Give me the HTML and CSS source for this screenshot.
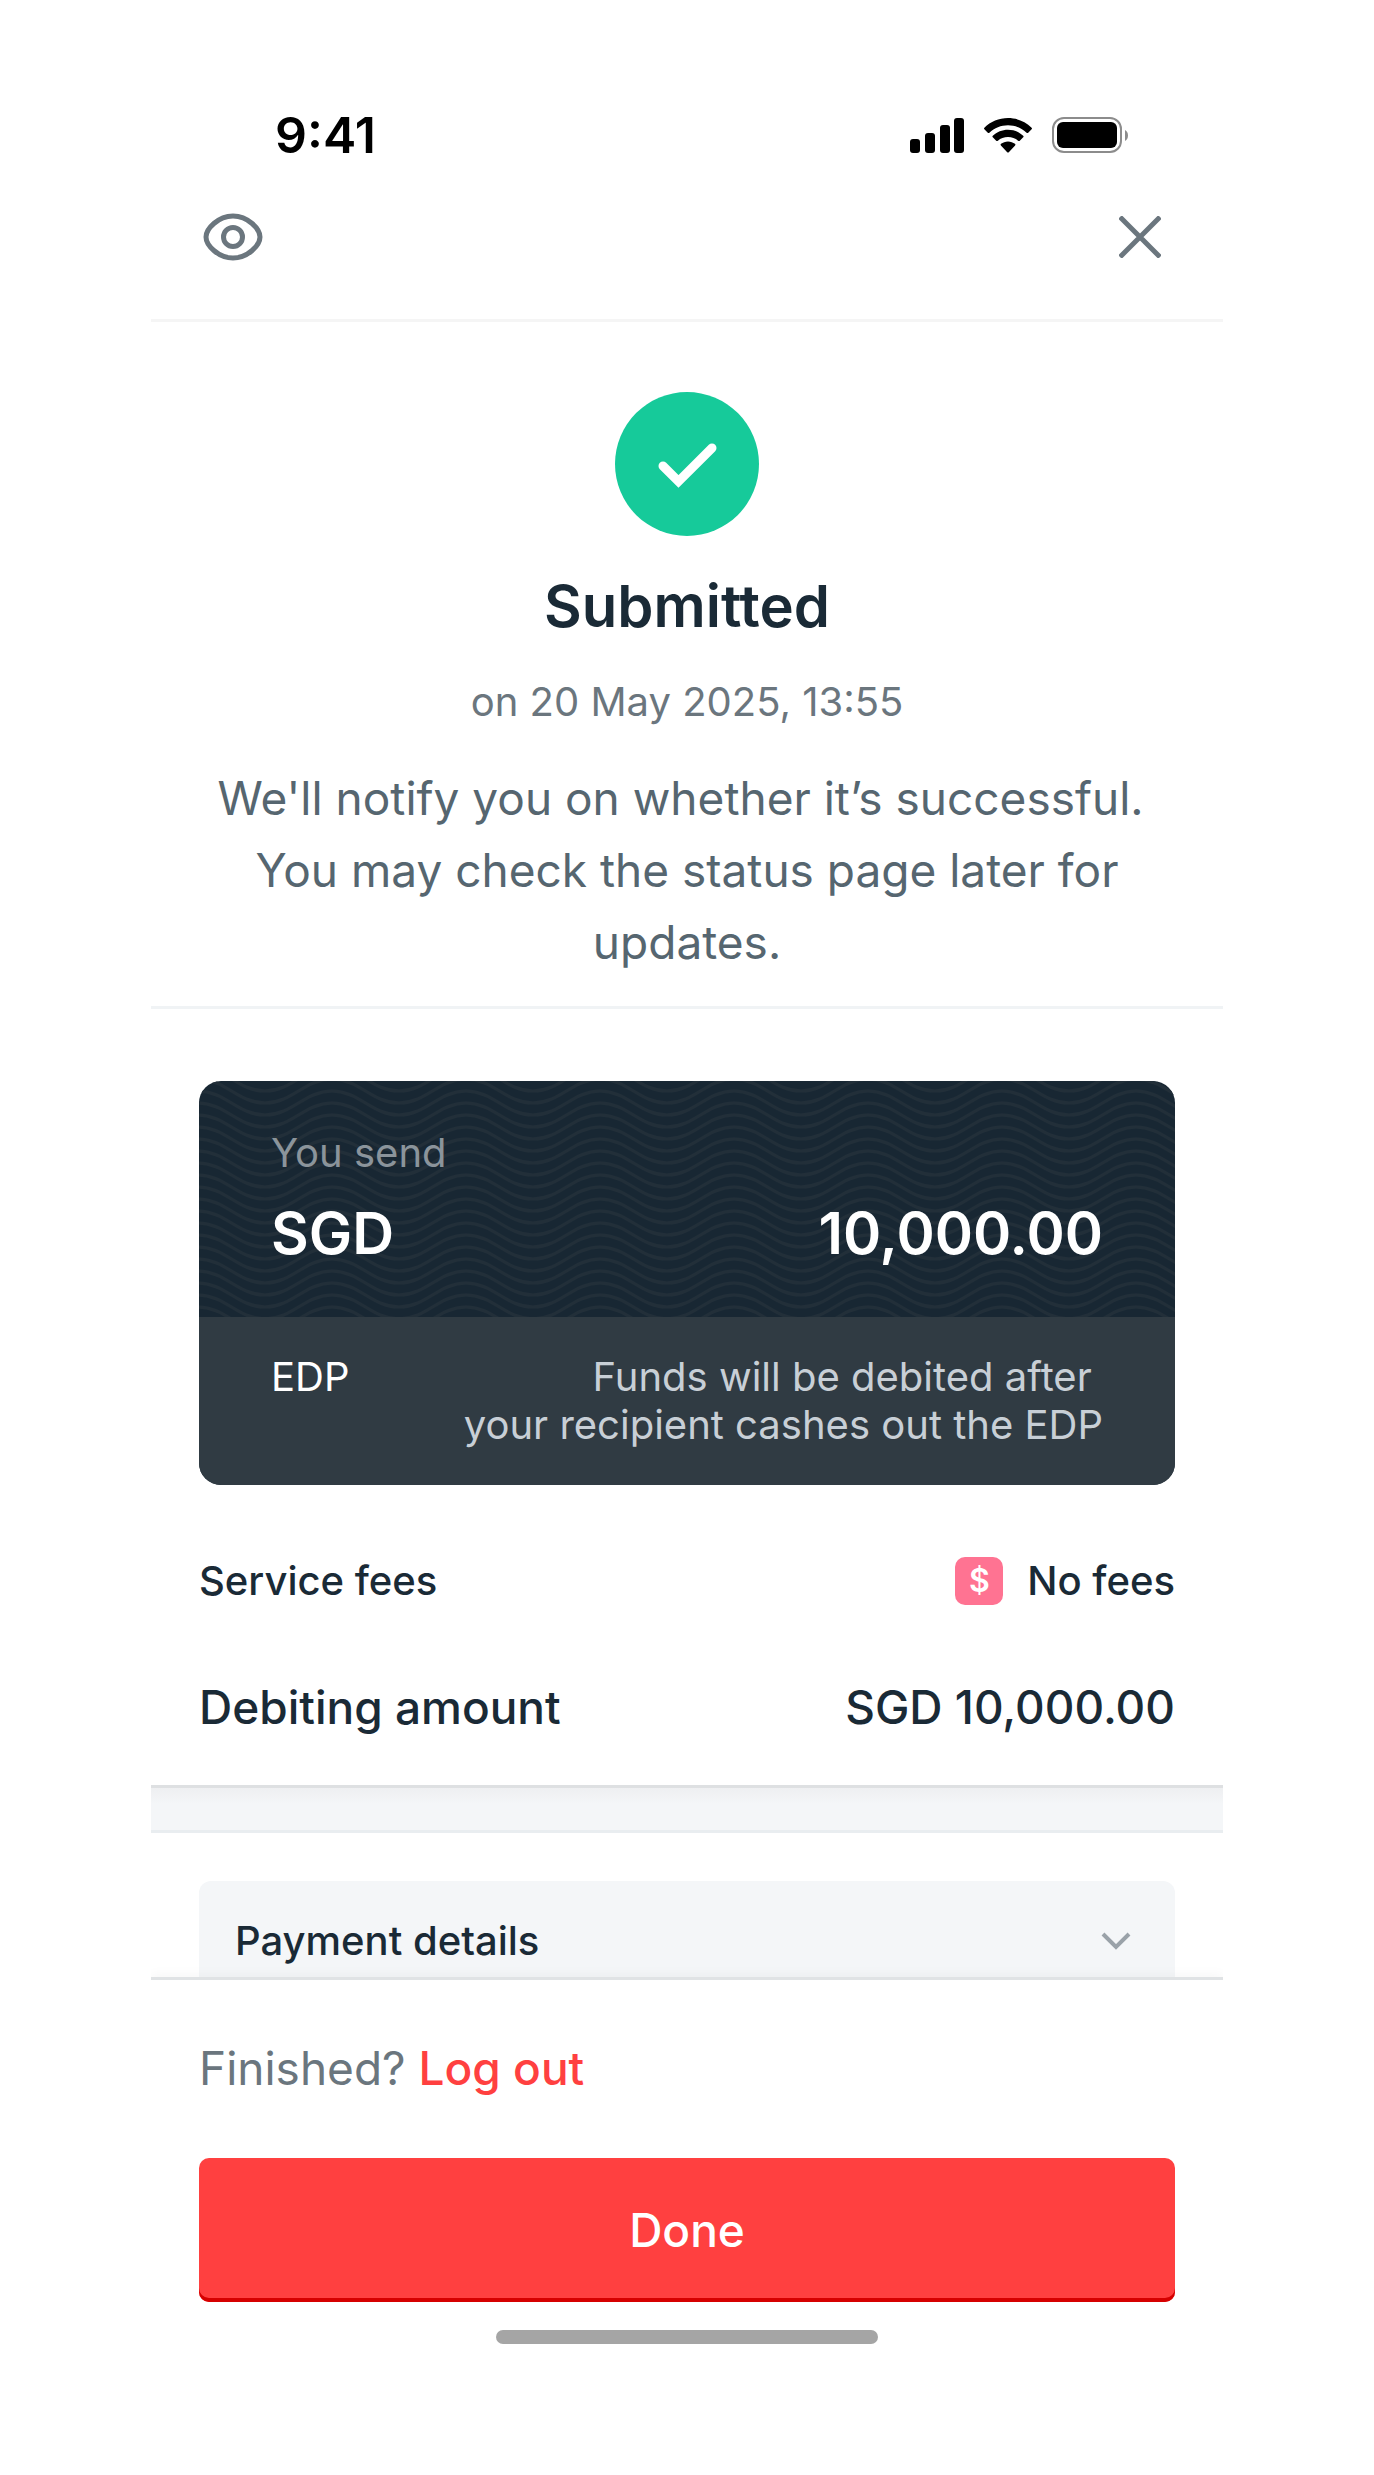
FILE: index.html
```html
<!DOCTYPE html>
<html lang="en">
	<head>
		<meta charset="utf-8">
		<meta name="viewport" content="width=device-width, initial-scale=1">
		<title>Submitted</title>
		<link rel="stylesheet" href="styles.css">
	</head>
	<body>
		<div class="app">
			<div class="statusbar">
				<span class="clock">9:41</span>
				<div class="indicators">
					<svg width="54" height="35" viewBox="0 0 54 35">
						<rect x="0" y="21" width="10" height="14" rx="3"/>
						<rect x="15" y="15" width="10" height="20" rx="3"/>
						<rect x="30" y="7" width="10" height="28" rx="3"/>
						<rect x="44" y="0" width="10" height="35" rx="3"/>
					</svg>
					<svg width="48" height="35" viewBox="0 0 48 35">
						<path d="M24 0C33 0 41.400 3.600 47.600 9.700Q48.400 10.500 47.600 11.300L44.200 14.700Q43.400 15.500 42.600 14.700C37.500 10 31 7.300 24 7.300S10.500 10 5.400 14.700Q4.600 15.500 3.800 14.700L.4 11.300Q-.4 10.500 .4 9.700C6.600 3.600 15 0 24 0Z"/>
						<path d="M24 11.700C29.900 11.700 35.200 14 39.200 17.700Q40 18.500 39.200 19.300L35.800 22.700Q35 23.500 34.100 22.700C31.400 20.300 27.900 19 24 19S16.600 20.300 13.900 22.700Q13 23.500 12.200 22.700L8.800 19.300Q8 18.500 8.800 17.700C12.800 14 18.100 11.700 24 11.700Z"/>
						<path d="M24 23.400C26.700 23.400 29.100 24.300 31 25.800Q31.900 26.600 31.100 27.400L24.800 34.200Q24 35 23.200 34.200L16.900 27.400Q16.100 26.600 17 25.800C18.900 24.300 21.300 23.400 24 23.400Z"/>
					</svg>
					<svg width="77" height="36" viewBox="0 0 77 36">
						<rect x="1" y="1" width="68" height="34" rx="11" fill="none" stroke="#8c8c8c" stroke-width="2"/>
						<rect x="5" y="5" width="60" height="26" rx="6"/>
						<path d="M73 13c4 2 4 9 0 11Z" fill="#8c8c8c"/>
					</svg>
				</div>
			</div>

			<header class="topbar">
				<button class="icon-btn" type="button" aria-label="Hide amounts">
					<svg width="60" height="48" viewBox="0 0 60 48">
						<path d="M3 24C3 16 15 3 30 3S57 16 57 24S45 45 30 45S3 32 3 24Z"/>
						<circle cx="30" cy="24" r="9.500"/>
					</svg>
				</button>
				<button class="icon-btn" type="button" aria-label="Close">
					<svg width="42" height="42" viewBox="0 0 42 42">
						<path d="M1 1l40 40M41 1L1 41"/>
					</svg>
				</button>
			</header>

			<main class="content">
				<section class="result">
					<svg class="tick" width="144" height="144" viewBox="0 0 144 144">
						<circle cx="72" cy="72" r="72" fill="#16ca9a"/>
						<path d="M48 74l15.500 15.500L97 56" fill="none" stroke="#fff" stroke-width="9" stroke-linecap="round"/>
					</svg>
					<h1>Submitted</h1>
					<p class="date">on 20 May 2025, 13:55</p>
					<p class="note">We'll notify you on whether it’s successful.&nbsp;<br>You may check the status page later for updates.</p>
				</section>

				<section class="summary">
					<div class="card">
						<div class="card-top">
							<svg class="waves" width="100%" height="100%">
								<pattern id="wave" width="134" height="12" patternUnits="userSpaceOnUse" patternTransform="translate(66 4)">
									<path d="M-67 -18C-40 -18 -27 6 0 6S40 -18 67 -18S107 6 134 6S174 -18 201 -18"/>
									<path d="M-67 -6C-40 -6 -27 18 0 18S40 -6 67 -6S107 18 134 18S174 -6 201 -6"/>
									<path d="M-67 6C-40 6 -27 30 0 30S40 6 67 6S107 30 134 30S174 6 201 6"/>
								</pattern>
								<rect width="100%" height="100%" fill="url(#wave)"/>
							</svg>
							<div class="label">You send</div>
							<div class="amount">
								<span>SGD</span>
								<span>10,000.00</span>
							</div>
						</div>
						<div class="card-bottom">
							<span class="method">EDP</span>
							<span class="hint">Funds will be debited after&nbsp;<br>your recipient cashes out the EDP</span>
						</div>
					</div>
					<div class="row">
						<span>Service fees</span>
						<span class="fees"><span class="badge">$</span>No fees</span>
					</div>
					<div class="row total">
						<span>Debiting amount</span>
						<span>SGD 10,000.00</span>
					</div>
				</section>

				<div class="divider"></div>

				<section class="details">
					<button class="accordion" type="button" aria-expanded="false">
						<span>Payment details</span>
						<svg width="30" height="18" viewBox="0 0 30 18">
							<path d="M2 2l13 13L28 2"/>
						</svg>
					</button>
				</section>
			</main>

			<footer class="actions">
				<p class="logout">Finished? <a href="#">Log out</a></p>
				<button class="done" type="button">Done</button>
				<div class="home"></div>
			</footer>
		</div>
	</body>
</html>
```
FILE: styles.css
```css
* {
	box-sizing: border-box;
}
body {
	margin: 0;
	background: #fff;
	color: #1a2a36;
	font-family: Inter, "Liberation Sans", sans-serif;
	font-size: 40px;
	line-height: 48px;
}
h1, p {
	margin: 0;
}
button {
	border: 0;
	font: inherit;
	color: inherit;
	cursor: pointer;
}
svg {
	display: block;
}

.app {
	display: flex;
	flex-direction: column;
	max-width: 1072px;
	height: 100vh;
	margin: 0 auto;
}

.statusbar {
	display: flex;
	justify-content: space-between;
	align-items: center;
	padding: 111px 94px 0 124px;
	color: #000;
}
.clock {
	font-size: 50px;
	font-weight: 600;
}
.indicators {
	display: flex;
	align-items: center;
	gap: 20px;
}

.topbar {
	display: flex;
	justify-content: space-between;
	align-items: center;
	padding: 54px 62px 58px 52px;
	border-bottom: 3px solid #f5f5f5;
}
.icon-btn {
	padding: 0;
	background: none;
}
.icon-btn svg {
	fill: none;
	stroke: #6b767e;
	stroke-width: 5;
}

.content {
	flex: 1;
	min-height: 0;
	overflow: hidden;
}

.result {
	display: flex;
	flex-direction: column;
	align-items: center;
	padding: 70px 48px 28px;
	border-bottom: 3px solid #f0f3f5;
	text-align: center;
}
h1 {
	margin-top: 34px;
	font-size: 58px;
	font-weight: 600;
	line-height: 72px;
}
.date {
	margin-top: 36px;
	color: #6b767e;
}
.note {
	margin-top: 36px;
	color: #566670;
	font-size: 46px;
	line-height: 72px;
}

.summary {
	padding: 72px 48px 42px;
}
.card {
	overflow: hidden;
	border-radius: 22px;
	background: #182733;
	color: #fff;
}
.card-top {
	position: relative;
	padding: 48px 72px;
}
.waves {
	position: absolute;
	top: 0;
	left: 0;
}
.waves path {
	fill: none;
	stroke: #222f39;
	stroke-width: 3;
}
.label {
	position: relative;
	color: #8b949b;
}
.amount {
	position: relative;
	display: flex;
	justify-content: space-between;
	margin-top: 20px;
	font-size: 58px;
	font-weight: 600;
	line-height: 72px;
}
.card-bottom {
	display: flex;
	justify-content: space-between;
	padding: 36px 72px;
	background: #303b43;
}
.hint {
	color: #c8cfd6;
	text-align: right;
}

.row {
	display: flex;
	justify-content: space-between;
	align-items: center;
	margin-top: 72px;
	font-weight: 500;
}
.fees {
	display: flex;
	gap: 24px;
}
.badge {
	width: 48px;
	border-radius: 10px;
	background: #ff7392;
	color: #fff;
	font-size: 32px;
	font-weight: 600;
	text-align: center;
}
.total {
	font-size: 46px;
	line-height: 72px;
	margin-top: 66px;
}

.divider {
	height: 48px;
	border-top: 3px solid #dee0e2;
	border-bottom: 3px solid #e9edf0;
	background: linear-gradient(#eeeff1, #f4f6f8 16px);
}

.details {
	padding: 48px;
}
.accordion {
	display: flex;
	justify-content: space-between;
	align-items: center;
	width: 100%;
	padding: 36px 44px 36px 36px;
	border-radius: 12px;
	background: #f4f6f8;
	font-weight: 500;
}
.accordion svg {
	fill: none;
	stroke: #9aa2a9;
	stroke-width: 4;
}

.actions {
	position: relative;
	padding: 52px 48px 131px;
	border-top: 3px solid #e0e3e5;
	background: #fff;
	box-shadow: 0 -2px 12px rgba(0, 0, 0, 0.04);
	/* keep the shadow above the sheet only */
	clip-path: inset(-20px 0 0);
}
.logout {
	color: #6b767e;
	font-size: 46px;
	line-height: 72px;
}
.logout a {
	color: #ff4040;
	font-weight: 500;
	text-decoration: none;
}
.done {
	display: block;
	width: 100%;
	height: 144px;
	margin-top: 54px;
	border-radius: 10px;
	background: #ff4040;
	box-shadow: inset 0 -4px 0 #d60000;
	color: #fff;
	font-size: 46px;
	font-weight: 500;
}
.home {
	width: 382px;
	height: 14px;
	margin: 28px auto 0;
	border-radius: 7px;
	background: #a5a5a5;
}
```
